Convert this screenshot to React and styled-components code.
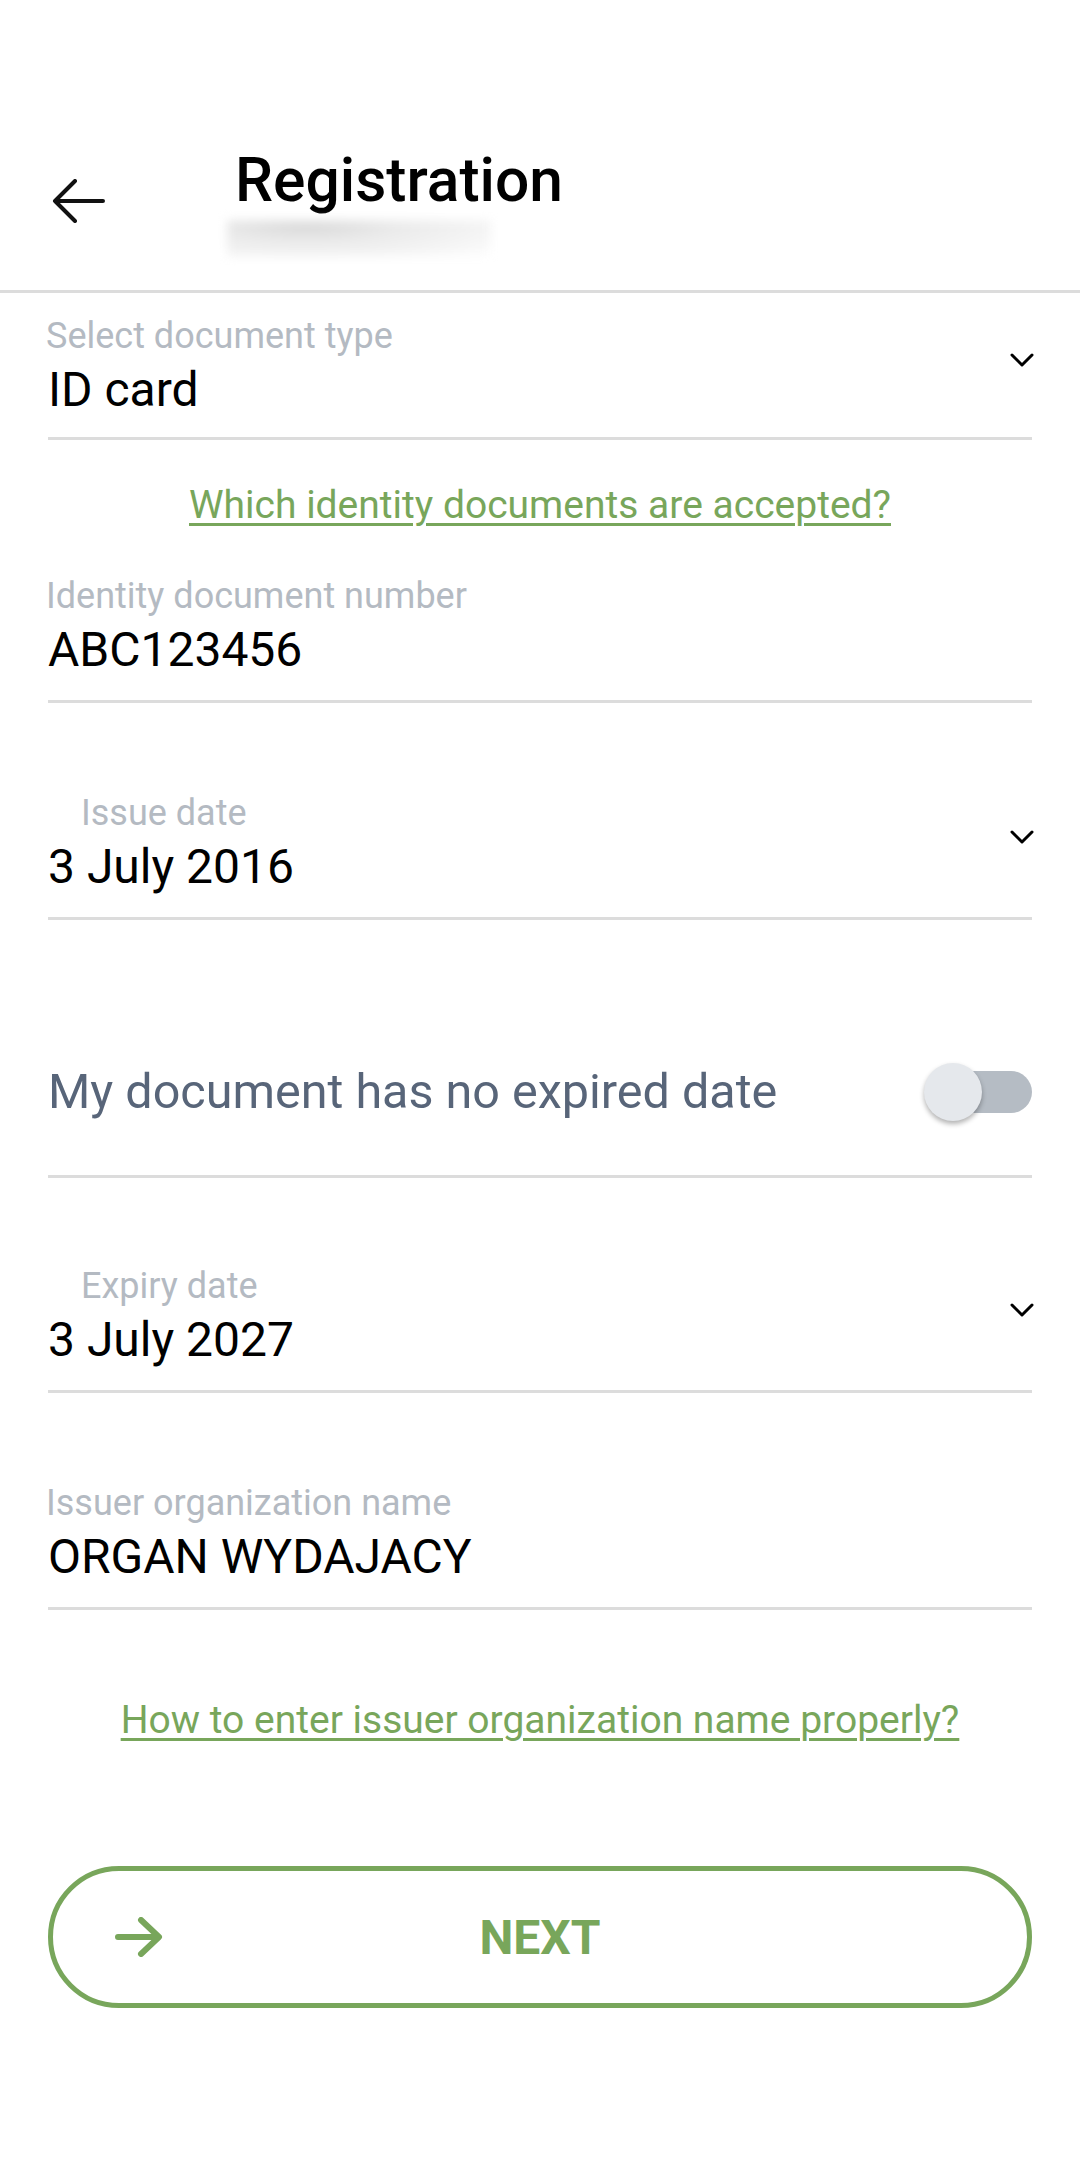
import styled, { createGlobalStyle } from "styled-components";

const GREEN = "#78a65b";
const LINE = "#dcdcdc";

const GlobalStyle = createGlobalStyle`
    body {
        margin: 0;
        background: #ffffff;
        font-family: Roboto, "Noto Sans", Arial, sans-serif;
    }
`;

const Page = styled.div`
    width: 1080px;
    min-height: 2160px;
    background: #ffffff;
`;

const Header = styled.header`
    display: flex;
    align-items: flex-start;
    height: 290px;
    padding-left: 52px;
    border-bottom: 3px solid ${LINE};
`;

const BackButton = styled.button`
    margin-top: 179px;
    width: 54px;
    height: 44px;
    padding: 0;
    border: none;
    background: none;
    display: flex;
`;

const TitleBlock = styled.div`
    display: flex;
    flex-direction: column;
    margin-top: 146px;
    margin-left: 129px;
`;

const Title = styled.h1`
    margin: 0;
    font-size: 60.5px;
    line-height: 70px;
    font-weight: 500;
    color: #000;
`;

const TitleShadow = styled.div`
    width: 264px;
    height: 37px;
    margin-top: 4px;
    margin-left: -8px;
    background: radial-gradient(
        ellipse at 30% 20%,
        #dadada 0%,
        #ebebeb 35%,
        #f5f5f5 70%,
        #ffffff 100%
    );
    filter: blur(5px);
`;

const Form = styled.main`
    padding: 0 48px;
    display: flex;
    flex-direction: column;
`;

const Field = styled.div`
    display: flex;
    align-items: center;
    padding-top: ${(p) => p.$top}px;
    padding-bottom: ${(p) => p.$bottom || 22}px;
    border-bottom: 3px solid ${LINE};
`;

const FieldBody = styled.div`
    flex: 1;
    display: flex;
    flex-direction: column;
`;

const Label = styled.span`
    font-size: 36px;
    line-height: 40px;
    color: #b4bac2;
    margin-bottom: 6px;
    margin-left: -2px;
    padding-left: ${(p) => (p.$indent ? 35 : 0)}px;
`;

const Value = styled.span`
    font-size: 48px;
    line-height: 56px;
    color: #000;
`;

const Chevron = styled.svg`
    width: 24px;
    height: 14px;
    margin-bottom: 14px;
    margin-right: -2px;
`;

const HelpLink = styled.a`
    display: block;
    margin-top: ${(p) => p.$top}px;
    text-align: center;
    font-size: 39px;
    line-height: 46px;
    color: ${GREEN};
    text-decoration: underline;
    text-decoration-thickness: 3px;
    text-underline-offset: 5px;
`;

const ToggleRow = styled.div`
    display: flex;
    align-items: center;
    justify-content: space-between;
    padding-top: 142px;
    padding-bottom: 53px;
    border-bottom: 3px solid ${LINE};
`;

const ToggleText = styled.span`
    font-size: 48.5px;
    line-height: 56px;
    color: #586579;
`;

const Switch = styled.div`
    position: relative;
    width: 108px;
    height: 60px;
    display: flex;
    align-items: center;
    justify-content: flex-end;
`;

const Track = styled.div`
    width: 96px;
    height: 42px;
    border-radius: 21px;
    background: #b5bcc4;
`;

const Knob = styled.div`
    position: absolute;
    left: 0;
    top: 1px;
    width: 58px;
    height: 58px;
    border-radius: 50%;
    background: #e5e8ec;
    box-shadow: 0 3px 5px rgba(0, 0, 0, 0.3);
`;

const NextButton = styled.button`
    margin-top: 123px;
    height: 142px;
    box-sizing: border-box;
    border: 5px solid ${GREEN};
    border-radius: 71px;
    background: #ffffff;
    display: grid;
    grid-template-columns: 1fr auto 1fr;
    align-items: center;
    padding: 0 61px;
    font-family: inherit;
`;

const NextLabel = styled.span`
    font-size: 48px;
    font-weight: 700;
    color: ${GREEN};
`;

const ChevronDown = () => (
    <Chevron viewBox="0 0 24 14">
        <path
            d="M2 2 L12 12 L22 2"
            fill="none"
            stroke="#000"
            strokeWidth="3"
            strokeLinecap="round"
            strokeLinejoin="round"
        />
    </Chevron>
);

const DataField = ({ top, bottom, label, value, indent, select }) => (
    <Field $top={top} $bottom={bottom}>
        <FieldBody>
            <Label $indent={indent}>{label}</Label>
            <Value>{value}</Value>
        </FieldBody>
        {select && <ChevronDown />}
    </Field>
);

const App = () => {
    return (
        <Page>
            <GlobalStyle />
            <Header>
                <BackButton aria-label="Back">
                    <svg width="54" height="44" viewBox="0 0 54 44">
                        <path
                            d="M51 22 H3 M3 22 L23 2 M3 22 L23 42"
                            fill="none"
                            stroke="#111"
                            strokeWidth="4"
                            strokeLinecap="round"
                            strokeLinejoin="round"
                        />
                    </svg>
                </BackButton>
                <TitleBlock>
                    <Title>Registration</Title>
                    <TitleShadow />
                </TitleBlock>
            </Header>
            <Form>
                <DataField
                    top={23}
                    bottom={19}
                    label="Select document type"
                    value="ID card"
                    select
                />
                <HelpLink $top={42}>Which identity documents are accepted?</HelpLink>
                <DataField
                    top={48}
                    label="Identity document number"
                    value="ABC123456"
                />
                <DataField
                    top={90}
                    label="Issue date"
                    value="3 July 2016"
                    indent
                    select
                />
                <ToggleRow>
                    <ToggleText>My document has no expired date</ToggleText>
                    <Switch>
                        <Track />
                        <Knob />
                    </Switch>
                </ToggleRow>
                <DataField
                    top={88}
                    label="Expiry date"
                    value="3 July 2027"
                    indent
                    select
                />
                <DataField
                    top={90}
                    label="Issuer organization name"
                    value="ORGAN WYDAJACY"
                />
                <HelpLink $top={87}>How to enter issuer organization name properly?</HelpLink>
                <NextButton>
                    <svg width="50" height="40" viewBox="0 0 50 40">
                        <path
                            d="M4 20 H44 M27 3 L45 20 L27 37"
                            fill="none"
                            stroke={GREEN}
                            strokeWidth="6"
                            strokeLinecap="round"
                            strokeLinejoin="round"
                        />
                    </svg>
                    <NextLabel>NEXT</NextLabel>
                    <span />
                </NextButton>
            </Form>
        </Page>
    );
};

export default App;
